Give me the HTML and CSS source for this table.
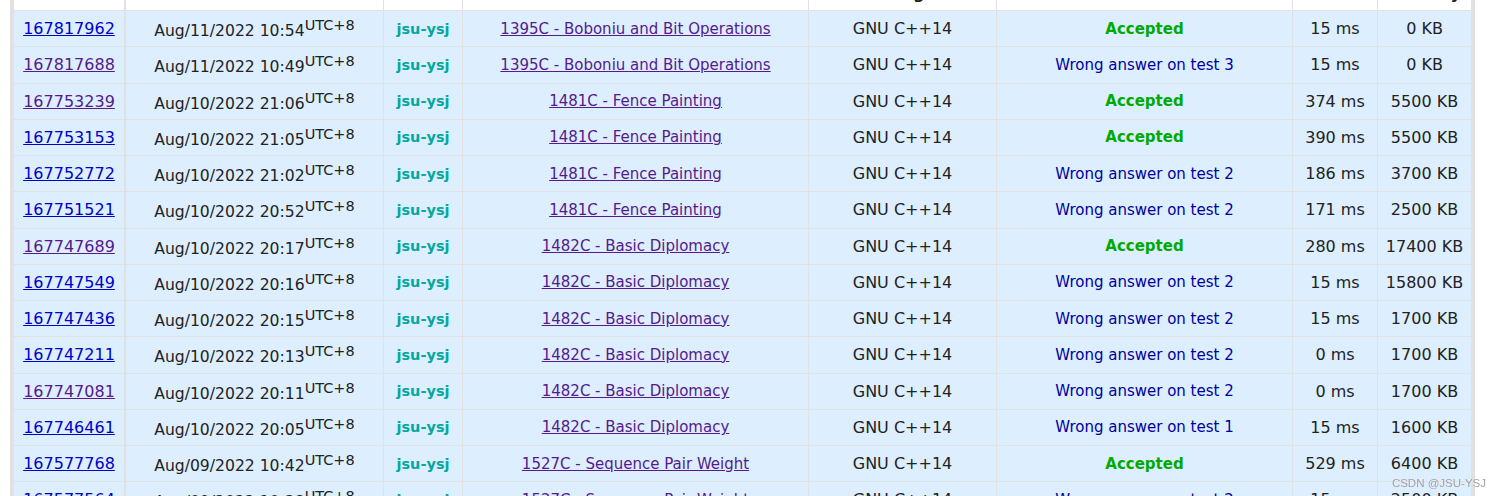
FILE: index.html
```html
<!DOCTYPE html>
<html lang="en">
<head>
<meta charset="utf-8">
<title>Status</title>
<link rel="stylesheet" href="styles.css">
</head>
<body>
<div class="frame">
<table class="status">
<colgroup>
<col class="c-id"><col class="c-when"><col class="c-who"><col class="c-prob"><col class="c-lang"><col class="c-verdict"><col class="c-time"><col class="c-mem">
</colgroup>
<thead>
<tr><th class="id">#</th><th>When</th><th>Who</th><th>Problem</th><th>Lang</th><th>Verdict</th><th>Time</th><th class="last">Memory</th></tr>
</thead>
<tbody>
<tr><td class="id"><a class="sub" href="#">167817962</a></td><td class="when">Aug/11/2022 10:54<sup>UTC+8</sup></td><td class="who">jsu-ysj</td><td class="prob"><a class="v" href="#">1395C - Boboniu and Bit Operations</a></td><td>GNU C++14</td><td class="ok">Accepted</td><td>15 ms</td><td class="last">0 KB</td></tr>
<tr><td class="id"><a class="sub v" href="#">167817688</a></td><td class="when">Aug/11/2022 10:49<sup>UTC+8</sup></td><td class="who">jsu-ysj</td><td class="prob"><a class="v" href="#">1395C - Boboniu and Bit Operations</a></td><td>GNU C++14</td><td class="wa">Wrong answer on test 3</td><td>15 ms</td><td class="last">0 KB</td></tr>
<tr><td class="id"><a class="sub v" href="#">167753239</a></td><td class="when">Aug/10/2022 21:06<sup>UTC+8</sup></td><td class="who">jsu-ysj</td><td class="prob"><a class="v" href="#">1481C - Fence Painting</a></td><td>GNU C++14</td><td class="ok">Accepted</td><td>374 ms</td><td class="last">5500 KB</td></tr>
<tr><td class="id"><a class="sub" href="#">167753153</a></td><td class="when">Aug/10/2022 21:05<sup>UTC+8</sup></td><td class="who">jsu-ysj</td><td class="prob"><a class="v" href="#">1481C - Fence Painting</a></td><td>GNU C++14</td><td class="ok">Accepted</td><td>390 ms</td><td class="last">5500 KB</td></tr>
<tr><td class="id"><a class="sub" href="#">167752772</a></td><td class="when">Aug/10/2022 21:02<sup>UTC+8</sup></td><td class="who">jsu-ysj</td><td class="prob"><a class="v" href="#">1481C - Fence Painting</a></td><td>GNU C++14</td><td class="wa">Wrong answer on test 2</td><td>186 ms</td><td class="last">3700 KB</td></tr>
<tr><td class="id"><a class="sub" href="#">167751521</a></td><td class="when">Aug/10/2022 20:52<sup>UTC+8</sup></td><td class="who">jsu-ysj</td><td class="prob"><a class="v" href="#">1481C - Fence Painting</a></td><td>GNU C++14</td><td class="wa">Wrong answer on test 2</td><td>171 ms</td><td class="last">2500 KB</td></tr>
<tr><td class="id"><a class="sub v" href="#">167747689</a></td><td class="when">Aug/10/2022 20:17<sup>UTC+8</sup></td><td class="who">jsu-ysj</td><td class="prob"><a class="v" href="#">1482C - Basic Diplomacy</a></td><td>GNU C++14</td><td class="ok">Accepted</td><td>280 ms</td><td class="last">17400 KB</td></tr>
<tr><td class="id"><a class="sub" href="#">167747549</a></td><td class="when">Aug/10/2022 20:16<sup>UTC+8</sup></td><td class="who">jsu-ysj</td><td class="prob"><a class="v" href="#">1482C - Basic Diplomacy</a></td><td>GNU C++14</td><td class="wa">Wrong answer on test 2</td><td>15 ms</td><td class="last">15800 KB</td></tr>
<tr><td class="id"><a class="sub" href="#">167747436</a></td><td class="when">Aug/10/2022 20:15<sup>UTC+8</sup></td><td class="who">jsu-ysj</td><td class="prob"><a class="v" href="#">1482C - Basic Diplomacy</a></td><td>GNU C++14</td><td class="wa">Wrong answer on test 2</td><td>15 ms</td><td class="last">1700 KB</td></tr>
<tr><td class="id"><a class="sub" href="#">167747211</a></td><td class="when">Aug/10/2022 20:13<sup>UTC+8</sup></td><td class="who">jsu-ysj</td><td class="prob"><a class="v" href="#">1482C - Basic Diplomacy</a></td><td>GNU C++14</td><td class="wa">Wrong answer on test 2</td><td>0 ms</td><td class="last">1700 KB</td></tr>
<tr><td class="id"><a class="sub v" href="#">167747081</a></td><td class="when">Aug/10/2022 20:11<sup>UTC+8</sup></td><td class="who">jsu-ysj</td><td class="prob"><a class="v" href="#">1482C - Basic Diplomacy</a></td><td>GNU C++14</td><td class="wa">Wrong answer on test 2</td><td>0 ms</td><td class="last">1700 KB</td></tr>
<tr><td class="id"><a class="sub" href="#">167746461</a></td><td class="when">Aug/10/2022 20:05<sup>UTC+8</sup></td><td class="who">jsu-ysj</td><td class="prob"><a class="v" href="#">1482C - Basic Diplomacy</a></td><td>GNU C++14</td><td class="wa">Wrong answer on test 1</td><td>15 ms</td><td class="last">1600 KB</td></tr>
<tr><td class="id"><a class="sub" href="#">167577768</a></td><td class="when">Aug/09/2022 10:42<sup>UTC+8</sup></td><td class="who">jsu-ysj</td><td class="prob"><a class="v" href="#">1527C - Sequence Pair Weight</a></td><td>GNU C++14</td><td class="ok">Accepted</td><td>529 ms</td><td class="last">6400 KB</td></tr>
<tr><td class="id"><a class="sub" href="#">167577564</a></td><td class="when">Aug/09/2022 10:38<sup>UTC+8</sup></td><td class="who">jsu-ysj</td><td class="prob"><a class="v" href="#">1527C - Sequence Pair Weight</a></td><td>GNU C++14</td><td class="wa">Wrong answer on test 2</td><td>15 ms</td><td class="last">2500 KB</td></tr>
</tbody>
</table>
</div>
<div class="watermark">CSDN @JSU-YSJ</div>
</body>
</html>
```
FILE: styles.css
```css
html, body {
  margin: 0;
  padding: 0;
  background: #fff;
  overflow: hidden;
}
body {
  font-family: "DejaVu Sans", Verdana, sans-serif;
  color: #222;
}
.frame {
  margin: -20px 0 0 10px;
  width: 1465px;
  box-sizing: border-box;
  padding: 0 4px;
  background: #e1e1e1;
}
.status {
  border-collapse: separate;
  border-spacing: 0;
  table-layout: fixed;
  width: 1457px;
}
.c-id { width: 112px; }
.c-when { width: 258px; }
.c-who { width: 79px; }
.c-prob { width: 346px; }
.c-lang { width: 188px; }
.c-verdict { width: 296px; }
.c-time { width: 85px; }
.c-mem { width: 93px; }

.status th {
  background: #fff;
  font-weight: bold;
  font-size: 16px;
  line-height: 19px;
  padding: 4px 3px 7px;
  border-right: 1px solid #e1e1e1;
  border-bottom: 1px solid #e1e1e1;
  text-align: center;
}
.status tbody tr {
  height: 36.25px;
}
.status td {
  background: #ddeeff;
  border-right: 1px solid #e1e1e1;
  border-bottom: 1px solid #e1e1e1;
  text-align: center;
  vertical-align: middle;
  padding: 0 3px;
  font-size: 16px;
  white-space: nowrap;
  overflow: hidden;
}
.status .id { border-right-width: 2px; }
.status .last { border-right: 0; }

a { text-decoration: underline; }
a.sub { color: #0000cc; }
a.v { color: #551a8b; }
.status td.when { font-size: 15.6px; }
.status td.when sup { font-size: 14.5px; }
.status td.who { font-size: 14.5px; font-weight: bold; color: #03a89e; }
.status td.prob { font-size: 15px; }
.status td.ok { font-size: 15px; font-weight: bold; color: #00aa00; }
.status td.wa { font-size: 15px; color: #0000a0; }

.watermark {
  position: fixed;
  right: 15px;
  bottom: 7px;
  font-family: "Liberation Sans", Arial, sans-serif;
  font-size: 11.5px;
  color: rgba(130, 130, 130, 0.75);
  text-shadow: 0 0 1px rgba(255, 255, 255, 0.8);
}
```
